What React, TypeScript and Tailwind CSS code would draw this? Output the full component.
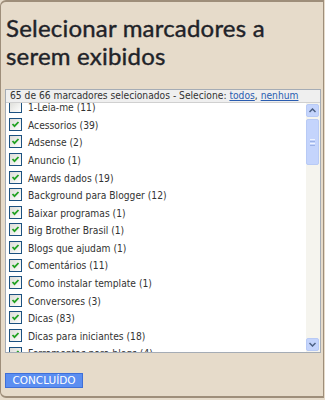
import React from 'react';

type Label = { name: string; count: number; checked: boolean };

const labels: Label[] = [
  { name: '1-Leia-me', count: 11, checked: false },
  { name: 'Acessorios', count: 39, checked: true },
  { name: 'Adsense', count: 2, checked: true },
  { name: 'Anuncio', count: 1, checked: true },
  { name: 'Awards dados', count: 19, checked: true },
  { name: 'Background para Blogger', count: 12, checked: true },
  { name: 'Baixar programas', count: 1, checked: true },
  { name: 'Big Brother Brasil', count: 1, checked: true },
  { name: 'Blogs que ajudam', count: 1, checked: true },
  { name: 'Comentários', count: 11, checked: true },
  { name: 'Como instalar template', count: 1, checked: true },
  { name: 'Conversores', count: 3, checked: true },
  { name: 'Dicas', count: 83, checked: true },
  { name: 'Dicas para iniciantes', count: 18, checked: true },
  { name: 'Ferramentas para blogs', count: 4, checked: true },
];

const CheckBox = ({ checked }: { checked: boolean }) => (
  <span className="w-[13px] h-[13px] shrink-0 border border-[#1c5180] bg-gradient-to-br from-[#dcdcd7] to-white flex items-center justify-center">
    {checked && (
      <svg width="9" height="9" viewBox="0 0 9 9">
        <path d="M1.5 4 L3.5 6.2 L7.5 2" stroke="#21a121" strokeWidth="1.8" fill="none" />
      </svg>
    )}
  </span>
);

const ScrollButton = ({ up }: { up: boolean }) => (
  <div className="h-[13px] w-[13px] rounded-[2px] border border-[#b8caf5] bg-[#c4d4fc] flex items-center justify-center">
    <svg width="7" height="5" viewBox="0 0 7 5">
      <path d={up ? 'M0.5 4 L3.5 1 L6.5 4' : 'M0.5 1 L3.5 4 L6.5 1'} stroke="#4d6185" strokeWidth="1.5" fill="none" />
    </svg>
  </div>
);

export default function App() {
  return (
    <div className="w-[325px] h-[400px] bg-[#e6dbca] overflow-hidden" style={{ fontFamily: '"DejaVu Sans", sans-serif' }}>
      <div className="h-[398px] w-[324px] border-t-[2px] border-l border-r border-b-[2px] border-[#9e8e7a] rounded-tl-[6px] rounded-bl-[6px] flex flex-col">
        <h1 className="px-[5px] pt-[12px] text-[24px] leading-[28px] tracking-[0.2px] text-[#1f2329] [-webkit-text-stroke:0.4px_#1f2329]" style={{ fontFamily: 'Lato, sans-serif' }}>
          Selecionar marcadores a serem exibidos
        </h1>

        <div className="mt-[19px] ml-[4px] w-[316px] h-[264px] border border-[#a5acb5] bg-white flex flex-col text-[#333] text-[10.2px]" style={{ fontFamily: '"DejaVu Sans Condensed", "DejaVu Sans", sans-serif' }}>
          <div className="h-[13px] bg-[#efefef] border-b border-[#d0d0d0] pl-[4px] leading-[12px] whitespace-nowrap">
            65 de 66 marcadores selecionados - Selecione:{' '}
            <span className="text-[#2a5db0] underline">todos</span>,{' '}
            <span className="text-[#2a5db0] underline">nenhum</span>
          </div>
          <div className="flex flex-1 min-h-0">
            <div className="flex-1 overflow-hidden">
              <div className="-mt-[5px] flex flex-col">
                {labels.map((l) => (
                  <div key={l.name} className="h-[17.6px] flex items-center gap-[6px] pl-[3px] whitespace-nowrap">
                    <CheckBox checked={l.checked} />
                    <span className="pt-[2px]">
                      {l.name} ({l.count})
                    </span>
                  </div>
                ))}
              </div>
            </div>
            <div className="w-[14px] bg-[#f5f4ee] flex flex-col justify-between py-[1px]">
              <div className="flex flex-col gap-[2px]">
                <ScrollButton up />
                <div className="h-[46px] w-[13px] rounded-[2px] border border-[#b8caf5] bg-[#c4d4fc] flex flex-col items-center justify-center gap-[1px]">
                  <span className="w-[5px] h-px bg-[#eef3ff]" />
                  <span className="w-[5px] h-px bg-[#9cb1e6]" />
                  <span className="w-[5px] h-px bg-[#eef3ff]" />
                  <span className="w-[5px] h-px bg-[#9cb1e6]" />
                </div>
              </div>
              <ScrollButton up={false} />
            </div>
          </div>
        </div>

        <div className="mt-[20px] ml-[4px] flex">
          <button className="h-[15px] w-[78px] bg-[#5b8ef1] border border-[#3e6fd8] text-white text-[10.5px] leading-[13px]">
            CONCLUÍDO
          </button>
        </div>
      </div>
    </div>
  );
}
